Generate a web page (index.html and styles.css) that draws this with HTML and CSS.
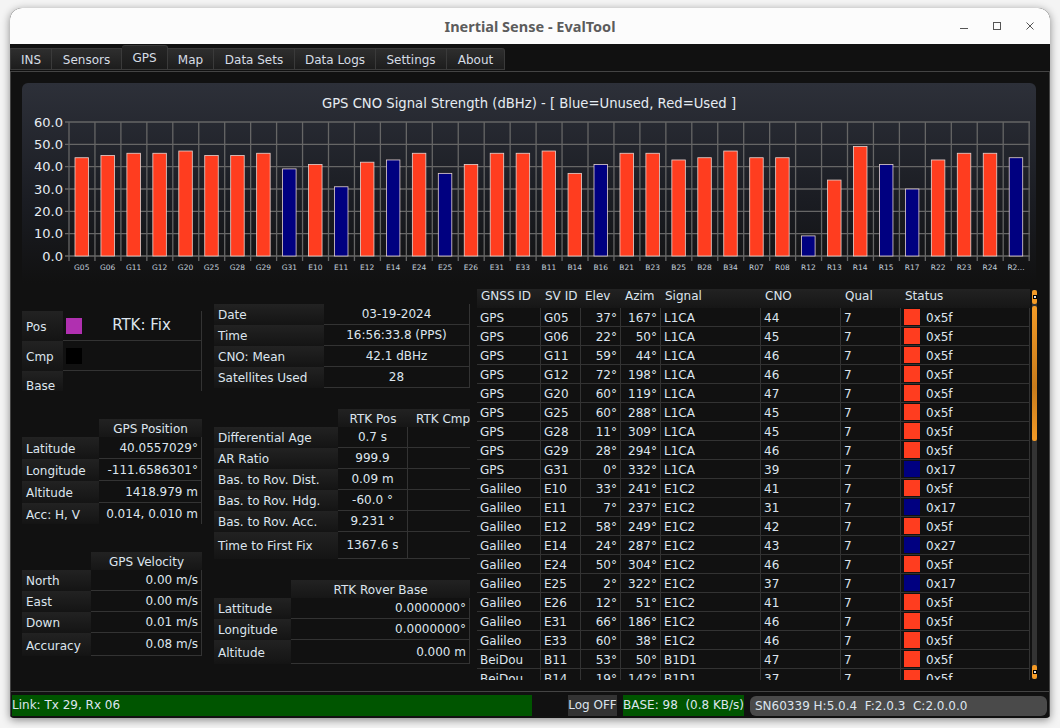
FILE: index.html
```html
<!DOCTYPE html>
<html lang="en">
<head>
    <meta charset="UTF-8">
    <title>Inertial Sense - EvalTool</title>
    <link rel="stylesheet" href="styles.css">
</head>
<body>
<div class="window">
    <div class="titlebar">
        <span class="title">Inertial Sense - EvalTool</span>
        <div class="winBtns">
            <svg width="12" height="12" viewBox="0 0 12 12"><path d="M2 8.5H10" stroke="#555" fill="none"/></svg>
            <svg width="12" height="12" viewBox="0 0 12 12"><rect x="2.5" y="2.5" width="7" height="7" stroke="#555" fill="none"/></svg>
            <svg width="12" height="12" viewBox="0 0 12 12"><path d="M2.5 2.5L9.5 9.5M9.5 2.5L2.5 9.5" stroke="#555" fill="none"/></svg>
        </div>
    </div>

    <div class="tabs">
        <div class="tab tab1">INS</div>
        <div class="tab tab2">Sensors</div>
        <div class="tab tab3 active">GPS</div>
        <div class="tab tab4">Map</div>
        <div class="tab tab5">Data Sets</div>
        <div class="tab tab6">Data Logs</div>
        <div class="tab tab7">Settings</div>
        <div class="tab tab8">About</div>
    </div>

    <div class="main">
        <div class="chartPanel">
            <div class="chartTitle">GPS CNO Signal Strength (dBHz) - [ Blue=Unused, Red=Used ]</div>
            <svg class="chart" width="1015" height="170" viewBox="0 0 1015 170">
                <path class="grid" d="M43 9H1008M43 31.33H1008M43 53.67H1008M43 76H1008M43 98.33H1008M43 120.67H1008M43 143H1008"/>
                <path class="grid" d="M47 9V148M72.95 9V148M98.9 9V148M124.85 9V148M150.8 9V148M176.75 9V148M202.7 9V148M228.65 9V148M254.6 9V148M280.55 9V148M306.5 9V148M332.45 9V148M358.4 9V148M384.35 9V148M410.3 9V148M436.25 9V148M462.2 9V148M488.15 9V148M514.1 9V148M540.05 9V148M566 9V148M591.95 9V148M617.9 9V148M643.85 9V148M669.8 9V148M695.75 9V148M721.7 9V148M747.65 9V148M773.6 9V148M799.55 9V148M825.5 9V148M851.45 9V148M877.4 9V148M903.35 9V148M929.3 9V148M955.25 9V148M981.2 9V148M1007.15 9V148"/>

                <text class="yLabel" x="41" y="14">60.0</text>
                <text class="yLabel" x="41" y="36">50.0</text>
                <text class="yLabel" x="41" y="58">40.0</text>
                <text class="yLabel" x="41" y="81">30.0</text>
                <text class="yLabel" x="41" y="103">20.0</text>
                <text class="yLabel" x="41" y="125">10.0</text>
                <text class="yLabel" x="41" y="148">0.0</text>

                <rect class="bar used" x="53" y="44.73" height="98.27"/>
                <rect class="bar used" x="78.95" y="42.5" height="100.5"/>
                <rect class="bar used" x="104.9" y="40.27" height="102.73"/>
                <rect class="bar used" x="130.85" y="40.27" height="102.73"/>
                <rect class="bar used" x="156.8" y="38.03" height="104.97"/>
                <rect class="bar used" x="182.75" y="42.5" height="100.5"/>
                <rect class="bar used" x="208.7" y="42.5" height="100.5"/>
                <rect class="bar used" x="234.65" y="40.27" height="102.73"/>
                <rect class="bar unused" x="260.6" y="55.9" height="87.1"/>
                <rect class="bar used" x="286.55" y="51.43" height="91.57"/>
                <rect class="bar unused" x="312.5" y="73.77" height="69.23"/>
                <rect class="bar used" x="338.45" y="49.2" height="93.8"/>
                <rect class="bar unused" x="364.4" y="46.97" height="96.03"/>
                <rect class="bar used" x="390.35" y="40.27" height="102.73"/>
                <rect class="bar unused" x="416.3" y="60.37" height="82.63"/>
                <rect class="bar used" x="442.25" y="51.43" height="91.57"/>
                <rect class="bar used" x="468.2" y="40.27" height="102.73"/>
                <rect class="bar used" x="494.15" y="40.27" height="102.73"/>
                <rect class="bar used" x="520.1" y="38.03" height="104.97"/>
                <rect class="bar used" x="546.05" y="60.37" height="82.63"/>
                <rect class="bar unused" x="572" y="51.43" height="91.57"/>
                <rect class="bar used" x="597.95" y="40.27" height="102.73"/>
                <rect class="bar used" x="623.9" y="40.27" height="102.73"/>
                <rect class="bar used" x="649.85" y="46.97" height="96.03"/>
                <rect class="bar used" x="675.8" y="44.73" height="98.27"/>
                <rect class="bar used" x="701.75" y="38.03" height="104.97"/>
                <rect class="bar used" x="727.7" y="44.73" height="98.27"/>
                <rect class="bar used" x="753.65" y="44.73" height="98.27"/>
                <rect class="bar unused" x="779.6" y="122.9" height="20.1"/>
                <rect class="bar used" x="805.55" y="67.07" height="75.93"/>
                <rect class="bar used" x="831.5" y="33.57" height="109.43"/>
                <rect class="bar unused" x="857.45" y="51.43" height="91.57"/>
                <rect class="bar unused" x="883.4" y="76" height="67"/>
                <rect class="bar used" x="909.35" y="46.97" height="96.03"/>
                <rect class="bar used" x="935.3" y="40.27" height="102.73"/>
                <rect class="bar used" x="961.25" y="40.27" height="102.73"/>
                <rect class="bar unused" x="987.2" y="44.73" height="98.27"/>

                <text class="xLabel" x="59.75" y="157">G05</text>
                <text class="xLabel" x="85.7" y="157">G06</text>
                <text class="xLabel" x="111.65" y="157">G11</text>
                <text class="xLabel" x="137.6" y="157">G12</text>
                <text class="xLabel" x="163.55" y="157">G20</text>
                <text class="xLabel" x="189.5" y="157">G25</text>
                <text class="xLabel" x="215.45" y="157">G28</text>
                <text class="xLabel" x="241.4" y="157">G29</text>
                <text class="xLabel" x="267.35" y="157">G31</text>
                <text class="xLabel" x="293.3" y="157">E10</text>
                <text class="xLabel" x="319.25" y="157">E11</text>
                <text class="xLabel" x="345.2" y="157">E12</text>
                <text class="xLabel" x="371.15" y="157">E14</text>
                <text class="xLabel" x="397.1" y="157">E24</text>
                <text class="xLabel" x="423.05" y="157">E25</text>
                <text class="xLabel" x="449" y="157">E26</text>
                <text class="xLabel" x="474.95" y="157">E31</text>
                <text class="xLabel" x="500.9" y="157">E33</text>
                <text class="xLabel" x="526.85" y="157">B11</text>
                <text class="xLabel" x="552.8" y="157">B14</text>
                <text class="xLabel" x="578.75" y="157">B16</text>
                <text class="xLabel" x="604.7" y="157">B21</text>
                <text class="xLabel" x="630.65" y="157">B23</text>
                <text class="xLabel" x="656.6" y="157">B25</text>
                <text class="xLabel" x="682.55" y="157">B28</text>
                <text class="xLabel" x="708.5" y="157">B34</text>
                <text class="xLabel" x="734.45" y="157">R07</text>
                <text class="xLabel" x="760.4" y="157">R08</text>
                <text class="xLabel" x="786.35" y="157">R12</text>
                <text class="xLabel" x="812.3" y="157">R13</text>
                <text class="xLabel" x="838.25" y="157">R14</text>
                <text class="xLabel" x="864.2" y="157">R15</text>
                <text class="xLabel" x="890.15" y="157">R17</text>
                <text class="xLabel" x="916.1" y="157">R22</text>
                <text class="xLabel" x="942.05" y="157">R23</text>
                <text class="xLabel" x="968" y="157">R24</text>
                <text class="xLabel" x="993.95" y="157">R2...</text>
            </svg>
        </div>

        <div class="columns">
            <div class="colLeft">
                <div class="kv fixTable">
                    <div class="lbl">Pos</div>
                    <div class="val fixCell"><span class="swatch purple"></span><span class="fixText">RTK: Fix</span></div>
                    <div class="lbl">Cmp</div>
                    <div class="val fixCell"><span class="swatch black"></span></div>
                    <div class="lbl">Base</div>
                    <div class="val fixCell noLine"></div>
                </div>

                <div class="kv posTable">
                    <div class="head">GPS Position</div>
                    <div class="lbl">Latitude</div><div class="val right">40.0557029°</div>
                    <div class="lbl">Longitude</div><div class="val right">-111.6586301°</div>
                    <div class="lbl">Altitude</div><div class="val right">1418.979 m</div>
                    <div class="lbl">Acc: H, V</div><div class="val right noLine">0.014, 0.010 m</div>
                </div>

                <div class="kv velTable">
                    <div class="head">GPS Velocity</div>
                    <div class="lbl">North</div><div class="val right">0.00 m/s</div>
                    <div class="lbl">East</div><div class="val right">0.00 m/s</div>
                    <div class="lbl">Down</div><div class="val right">0.01 m/s</div>
                    <div class="lbl lastLbl">Accuracy</div><div class="val right">0.08 m/s</div>
                </div>
            </div>

            <div class="colMid">
                <div class="kv dateTable">
                    <div class="lbl">Date</div><div class="val center">03-19-2024</div>
                    <div class="lbl">Time</div><div class="val center">16:56:33.8 (PPS)</div>
                    <div class="lbl">CNO: Mean</div><div class="val center">42.1 dBHz</div>
                    <div class="lbl">Satellites Used</div><div class="val center">28</div>
                </div>

                <div class="kv rtkTable">
                    <div class="head">RTK Pos</div><div class="head clip">RTK Cmp</div>
                    <div class="lbl">Differential Age</div><div class="val center split">0.7 s</div><div class="val open"></div>
                    <div class="lbl">AR Ratio</div><div class="val center split">999.9</div><div class="val open"></div>
                    <div class="lbl">Bas. to Rov. Dist.</div><div class="val center split">0.09 m</div><div class="val open"></div>
                    <div class="lbl">Bas. to Rov. Hdg.</div><div class="val center split">-60.0 °</div><div class="val open"></div>
                    <div class="lbl">Bas. to Rov. Acc.</div><div class="val center split">9.231 °</div><div class="val open"></div>
                    <div class="lbl">Time to First Fix</div><div class="val center split">1367.6 s</div><div class="val open"></div>
                </div>

                <div class="kv baseTable">
                    <div class="head">RTK Rover Base</div>
                    <div class="lbl">Lattitude</div><div class="val right">0.0000000°</div>
                    <div class="lbl">Longitude</div><div class="val right">0.0000000°</div>
                    <div class="lbl lastLbl">Altitude</div><div class="val right">0.000 m</div>
                </div>
            </div>

            <div class="colSat">
                <div class="satClip">
                    <table class="satTable">
                        <colgroup>
                            <col class="c1"><col class="c2"><col class="c3"><col class="c4"><col class="c5"><col class="c6"><col class="c7"><col class="c8">
                        </colgroup>
                        <thead>
                            <tr><th>GNSS ID</th><th>SV ID</th><th>Elev</th><th>Azim</th><th>Signal</th><th>CNO</th><th>Qual</th><th>Status</th></tr>
                        </thead>
                        <tbody>
                            <tr><td>GPS</td><td>G05</td><td class="num">37°</td><td class="num">167°</td><td>L1CA</td><td>44</td><td>7</td><td><span class="dot red"></span>0x5f</td></tr>
                            <tr><td>GPS</td><td>G06</td><td class="num">22°</td><td class="num">50°</td><td>L1CA</td><td>45</td><td>7</td><td><span class="dot red"></span>0x5f</td></tr>
                            <tr><td>GPS</td><td>G11</td><td class="num">59°</td><td class="num">44°</td><td>L1CA</td><td>46</td><td>7</td><td><span class="dot red"></span>0x5f</td></tr>
                            <tr><td>GPS</td><td>G12</td><td class="num">72°</td><td class="num">198°</td><td>L1CA</td><td>46</td><td>7</td><td><span class="dot red"></span>0x5f</td></tr>
                            <tr><td>GPS</td><td>G20</td><td class="num">60°</td><td class="num">119°</td><td>L1CA</td><td>47</td><td>7</td><td><span class="dot red"></span>0x5f</td></tr>
                            <tr><td>GPS</td><td>G25</td><td class="num">60°</td><td class="num">288°</td><td>L1CA</td><td>45</td><td>7</td><td><span class="dot red"></span>0x5f</td></tr>
                            <tr><td>GPS</td><td>G28</td><td class="num">11°</td><td class="num">309°</td><td>L1CA</td><td>45</td><td>7</td><td><span class="dot red"></span>0x5f</td></tr>
                            <tr><td>GPS</td><td>G29</td><td class="num">28°</td><td class="num">294°</td><td>L1CA</td><td>46</td><td>7</td><td><span class="dot red"></span>0x5f</td></tr>
                            <tr><td>GPS</td><td>G31</td><td class="num">0°</td><td class="num">332°</td><td>L1CA</td><td>39</td><td>7</td><td><span class="dot blue"></span>0x17</td></tr>
                            <tr><td>Galileo</td><td>E10</td><td class="num">33°</td><td class="num">241°</td><td>E1C2</td><td>41</td><td>7</td><td><span class="dot red"></span>0x5f</td></tr>
                            <tr><td>Galileo</td><td>E11</td><td class="num">7°</td><td class="num">237°</td><td>E1C2</td><td>31</td><td>7</td><td><span class="dot blue"></span>0x17</td></tr>
                            <tr><td>Galileo</td><td>E12</td><td class="num">58°</td><td class="num">249°</td><td>E1C2</td><td>42</td><td>7</td><td><span class="dot red"></span>0x5f</td></tr>
                            <tr><td>Galileo</td><td>E14</td><td class="num">24°</td><td class="num">287°</td><td>E1C2</td><td>43</td><td>7</td><td><span class="dot blue"></span>0x27</td></tr>
                            <tr><td>Galileo</td><td>E24</td><td class="num">50°</td><td class="num">304°</td><td>E1C2</td><td>46</td><td>7</td><td><span class="dot red"></span>0x5f</td></tr>
                            <tr><td>Galileo</td><td>E25</td><td class="num">2°</td><td class="num">322°</td><td>E1C2</td><td>37</td><td>7</td><td><span class="dot blue"></span>0x17</td></tr>
                            <tr><td>Galileo</td><td>E26</td><td class="num">12°</td><td class="num">51°</td><td>E1C2</td><td>41</td><td>7</td><td><span class="dot red"></span>0x5f</td></tr>
                            <tr><td>Galileo</td><td>E31</td><td class="num">66°</td><td class="num">186°</td><td>E1C2</td><td>46</td><td>7</td><td><span class="dot red"></span>0x5f</td></tr>
                            <tr><td>Galileo</td><td>E33</td><td class="num">60°</td><td class="num">38°</td><td>E1C2</td><td>46</td><td>7</td><td><span class="dot red"></span>0x5f</td></tr>
                            <tr><td>BeiDou</td><td>B11</td><td class="num">53°</td><td class="num">50°</td><td>B1D1</td><td>47</td><td>7</td><td><span class="dot red"></span>0x5f</td></tr>
                            <tr><td>BeiDou</td><td>B14</td><td class="num">19°</td><td class="num">142°</td><td>B1D1</td><td>37</td><td>7</td><td><span class="dot red"></span>0x5f</td></tr>
                        </tbody>
                    </table>
                </div>
                <div class="scrollbar">
                    <div class="scrollBtn"><span></span></div>
                    <div class="scrollThumb"></div>
                    <div class="scrollTrack"></div>
                    <div class="scrollBtn"><span></span></div>
                </div>
            </div>
        </div>
    </div>

    <div class="footer">
        <div class="linkBar">Link: Tx 29, Rx 06</div>
        <div class="logBtn">Log OFF</div>
        <div class="baseBar">BASE: 98&nbsp; (0.8 KB/s)</div>
        <div class="snBar">SN60339 H:5.0.4&nbsp; F:2.0.3&nbsp; C:2.0.0.0</div>
    </div>
</div>
</body>
</html>
```

FILE: styles.css
```css
body {
    margin: 0;
    height: 728px;
    overflow: hidden;
    background-color: #f4f4f4;
    font-family: "DejaVu Sans", sans-serif;
    font-size: 12px;
    color: #dde5ee;
}

.window {
    margin: 8px 10px 0;
    width: 1040px;
    height: 710px;
    display: flex;
    flex-direction: column;
    overflow: hidden;
    background-color: #111;
    border-radius: 12px 12px 4px 4px;
    box-shadow: 0 2px 9px rgba(0, 0, 0, 0.45);
}

/* Title bar */
.titlebar {
    position: relative;
    flex: none;
    height: 36px;
    display: flex;
    justify-content: center;
    align-items: center;
    background-color: #fcfcfc;
}

.title {
    font-family: "Noto Sans", sans-serif;
    font-size: 14.5px;
    font-weight: 700;
    color: #5c5c5c;
}

.winBtns {
    position: absolute;
    top: 12px;
    right: 14px;
    display: flex;
    gap: 21px;
}

/* Tabs */
.tabs {
    flex: none;
    height: 28px;
    display: flex;
    align-items: flex-end;
    box-sizing: border-box;
    padding-bottom: 1px;
    border-bottom: 1px solid #444;
    background-color: #111;
}

.tab {
    box-sizing: border-box;
    height: 22px;
    line-height: 22px;
    text-align: center;
    background: linear-gradient(#2e2e2e, #1d1d1d);
    border: 1px solid #3a3a3a;
    border-left: none;
    color: #d6dde5;
}

.tab1 { width: 42px; border-left: 1px solid #3a3a3a; }
.tab2 { width: 70px; }
.tab3 { width: 46px; }
.tab4 { width: 46px; }
.tab5 { width: 81px; }
.tab6 { width: 81px; }
.tab7 { width: 71px; }
.tab8 { width: 58px; border-top-right-radius: 3px; }

.tab.active {
    height: 25px;
    line-height: 22px;
    padding-top: 1px;
    background: linear-gradient(#262626, #1a1a1a);
    border-radius: 3px 3px 0 0;
}

/* Main area */
.main {
    flex: 1;
    min-height: 0;
    padding: 11px 13px 0 12px;
    border-left: 1px solid #444;
    border-right: 1px solid #444;
    margin: 0;
}

.chartPanel {
    height: 200px;
    margin-left: -1px;
    border-radius: 6px 6px 0 0;
    background: linear-gradient(#2d3039, #1a1c22 60%, #111);
}

.chartTitle {
    height: 30px;
    line-height: 42px;
    text-align: center;
    font-size: 13.2px;
    color: #e6ecf2;
}

.chart {
    display: block;
}

.grid {
    fill: none;
    stroke: #666;
    stroke-width: 1.3;
}

.yLabel {
    font-size: 13px;
    fill: #e6ecf2;
    text-anchor: end;
}

.xLabel {
    font-size: 7.5px;
    fill: #c3cfdc;
    text-anchor: middle;
}

.bar {
    width: 13.5px;
    stroke: #e6d4d0;
    stroke-width: 0.8;
}

.used { fill: #ff3d1f; }
.unused { fill: #000080; }

/* Lower columns */
.columns {
    display: flex;
    margin-left: -1px;
}

.colLeft {
    flex: none;
    width: 180px;
    margin-right: 12px;
}

.colMid {
    flex: none;
    width: 256px;
    margin-right: 7px;
}

.colSat {
    flex: none;
    width: 560px;
    display: flex;
    margin-top: 6px;
}

.kv {
    display: grid;
}

.head {
    height: 18px;
    line-height: 20px;
    text-align: center;
    background: linear-gradient(#222, #161616);
    color: #dde5ee;
    white-space: nowrap;
}

.lbl {
    padding-left: 4px;
    white-space: nowrap;
    overflow: hidden;
    background: linear-gradient(#222, #141414);
    display: flex;
    align-items: center;
}

.lbl.lastLbl {
    padding-top: 2px;
}

.val {
    box-sizing: border-box;
    border-bottom: 1px solid #333;
    border-right: 1px solid #333;
    display: flex;
    align-items: center;
    white-space: nowrap;
}

.val.right {
    justify-content: flex-end;
    padding-right: 3px;
}

.val.center {
    justify-content: center;
}

.val.noLine {
    border-bottom: none;
}

.fixTable {
    margin-top: 28px;
    grid-template-columns: 41px 139px;
    grid-template-rows: 30px 30px 20px;
}

.fixTable .lbl {
    padding-top: 2px;
}

.fixTable .lbl:nth-child(5) {
    align-items: flex-start;
    padding-top: 8px;
    height: 20px;
    box-sizing: border-box;
}

.fixCell {
    padding-left: 3px;
}

.swatch {
    flex: none;
    width: 16px;
    height: 16px;
}

.purple { background-color: #b030b0; }
.black { background-color: #000; }

.fixText {
    flex: 1;
    text-align: center;
    font-size: 15px;
    margin-top: -2px;
}

.posTable {
    margin-top: 28px;
    grid-template-columns: 77px 103px;
    grid-template-rows: 18px 22px 22px 22px 21px;
}

.posTable .lbl {
    padding-top: 2px;
}

.velTable {
    margin-top: 28px;
    grid-template-columns: 69px 111px;
    grid-template-rows: 18px 21px 21px 21px 23px;
}

.posTable .head,
.velTable .head,
.baseTable .head {
    grid-column: 2;
    line-height: 21px;
}

.dateTable {
    margin-top: 21px;
    grid-template-columns: 110px 146px;
    grid-template-rows: repeat(4, 21px);
}

.rtkTable {
    margin-top: 21px;
    grid-template-columns: 124px 70px 62px;
    grid-template-rows: 18px repeat(5, 21px) 27px;
}

.rtkTable .head:first-child {
    grid-column: 2;
}

.head.clip {
    overflow: hidden;
    text-align: left;
    padding-left: 8px;
}

.val.split {
    border-right: 1px solid #333;
}

.val.open {
    border-right: none;
}

.baseTable {
    margin-top: 21px;
    grid-template-columns: 77px 179px;
    grid-template-rows: 18px 21px 21px 24px;
}

/* Satellite table */
.satClip {
    flex: none;
    width: 553px;
    height: 391px;
    overflow: hidden;
}

.satTable {
    border-collapse: separate;
    border-spacing: 0;
    table-layout: fixed;
    width: 553px;
}

.c1 { width: 64px; }
.c2 { width: 40px; }
.c3 { width: 40px; }
.c4 { width: 40px; }
.c5 { width: 100px; }
.c6 { width: 80px; }
.c7 { width: 60px; }
.c8 { width: 129px; }

.satTable th {
    box-sizing: border-box;
    height: 19px;
    padding: 0 0 0 4px;
    line-height: 15px;
    vertical-align: top;
    font-weight: normal;
    text-align: left;
    white-space: nowrap;
    overflow: hidden;
    background: linear-gradient(#222, #161616);
}

.satTable td {
    box-sizing: border-box;
    height: 19px;
    padding: 2px 3px 0;
    white-space: nowrap;
    border-bottom: 1px solid #333;
    border-right: 1px solid #333;
    line-height: 16px;
}

.satTable td.num {
    text-align: right;
}

.dot {
    display: inline-block;
    width: 16px;
    height: 16px;
    margin-right: 6px;
    vertical-align: top;
    margin-top: -1px;
}

.red { background-color: #ff3d1f; }
.blue { background-color: #000080; }

.scrollbar {
    flex: none;
    width: 5px;
    height: 389px;
    margin: 1px 0 0 2px;
    display: flex;
    flex-direction: column;
    background-color: #333;
    border-radius: 2px;
}

.scrollBtn {
    flex: none;
    height: 14px;
    display: flex;
    align-items: center;
    justify-content: center;
    background-color: #f39a26;
    border-radius: 2px;
}

.scrollBtn span {
    width: 2px;
    height: 2px;
    background-color: #ddd;
    outline: 1px solid #000;
}

.scrollThumb {
    flex: none;
    height: 135px;
    margin-top: 2px;
    background: linear-gradient(#f39a26, #c97c1c 60%, #f39a26);
    border-radius: 2px;
}

.scrollTrack {
    flex: 1;
}

/* Footer */
.footer {
    flex: none;
    height: 27px;
    box-sizing: border-box;
    padding: 3px 1px 2px 1px;
    display: flex;
    border-top: 1px solid #444;
    border-left: 1px solid #444;
    border-right: 1px solid #444;
}

.linkBar,
.baseBar {
    background-color: #005500;
    line-height: 21px;
    color: #dde5ee;
}

.linkBar {
    width: 520px;
    box-sizing: border-box;
}

.logBtn {
    width: 49px;
    margin-left: 36px;
    text-align: center;
    line-height: 21px;
    background-color: #333;
}

.baseBar {
    width: 121px;
    margin-left: 6px;
    box-sizing: border-box;
    white-space: nowrap;
}

.snBar {
    flex: 1;
    margin: 1px 1px 0 6px;
    padding-left: 5px;
    line-height: 20px;
    white-space: nowrap;
    background-color: #4a4a4a;
    border-radius: 6px;
}
```
